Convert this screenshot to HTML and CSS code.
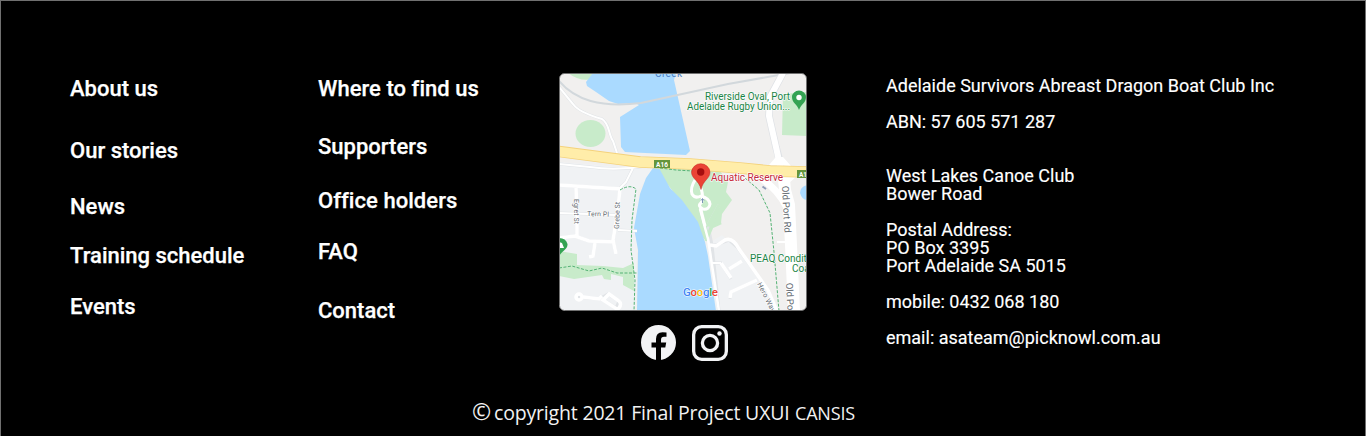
FILE: index.html
```html
<!DOCTYPE html>
<html lang="en">
<head>
<meta charset="utf-8">
<title>Adelaide Survivors Abreast</title>
<link rel="stylesheet" href="styles.css">
</head>
<body>
<footer class="footer">
  <div class="columns">
    <nav class="menu menu-main">
      <a>About us</a><a>Our stories</a><a>News</a><a>Training schedule</a><a>Events</a>
    </nav>
    <nav class="menu menu-help">
      <a>Where to find us</a><a>Supporters</a><a>Office holders</a><a>FAQ</a><a>Contact</a>
    </nav>
    <div class="location">
      <svg class="map" viewBox="559 73 248 238" role="img" aria-label="Map">
        <defs><clipPath id="frame"><rect x="559.5" y="73.5" width="247" height="237" rx="5"/></clipPath></defs>
        <g clip-path="url(#frame)">
          <rect x="559" y="73" width="248" height="238" fill="#f1f0ef"/>
          <path d="M559 162L632 168L655 169L638 190L636 311H559ZM706 245L722 235L740 252L768 288L780 311H714Z" fill="#f0f2f4"/>
          <!-- parks -->
          <g fill="#c8ebca">
            <ellipse cx="590.500" cy="133.500" rx="15" ry="13.500"/>
            <path d="M568 73Q584 85 600 76L603 73ZM783 94L807 92V136L782 135ZM559 251L577 254V265L603 266L623 268L634 263V291L623 285V277L611 274V280L604 279L602 275L574 279L559 276Z"/>
            <path d="M657 166L720 171L728 182L726 192L732 200L722 214L721 223L712 227L710 235L706 241L696 230L681 211L672 190L659 174Z"/>
          </g>
          <!-- water -->
          <path d="M593 73L586 82L587 86L596 92L609 101L618 104L635 103L639 105L620 117L621 147L625 152L686 155L690 151L674 80L676 73ZM653 168H659L670 188L682 200L698 222L705 242L708 256L716 311H637L638 250L634 228L640 194L646 178ZM807 185Q800 187 800 193Q802 200 807 200Z" fill="#aadaff"/>
          <path d="M559 81C575 100 600 108 641 103L728 84L790 73" class="rail"/>
          <!-- minor roads -->
          <g class="casing">
            <path d="M559 87L573 104C578 111 588 115 602 119C610 124 608 134 613 141L617 153M559 164L590 167Q615 171 646 166M633 168L626 182L620 188"/>
            <path d="M559 185L620 189L617 217L613 240L616 254M576 187L577 214V238M559 213L615 215M559 238L575 236L589 241L615 242M595 243L593 256L589 257M618 230L637 231"/>
            <path d="M578 297L599 299L608 294L619 301L616 308L602 299M719 205L708 225L712 245L715 273L719 311M711 245L716 245L729 240L737 247L768 290L777 311M711 263H721L731 279M729 269L742 261M757 280L731 292L730 299"/>
          </g>
          <path d="M719 205L708 225L721 223L712 227L706 241Z" fill="#c8ebca" stroke="#c8ebca" stroke-width="3"/>
          <path d="M783 73L770 97L769 116L776 147L781 166" fill="none" stroke="#dfe2e6" stroke-width="7.5"/>
          <g class="lane">
            <path d="M559 87L573 104C578 111 588 115 602 119C610 124 608 134 613 141L617 153M559 164L590 167Q615 171 646 166M633 168L626 182L620 188"/>
            <path d="M559 213L615 215M618 230L637 231M711 263H721M777 242L788 242"/>
          </g>
          <g class="street">
            <path d="M559 185L620 189L617 217L613 240L616 254M576 187L577 214V238M559 238L575 236L589 241L615 242M595 243L593 256L589 257"/>
            <circle cx="579" cy="297" r="3"/><path d="M583 297L599 299L602 296"/>
            <path d="M609 294L619 301Q622 304 619 308Q617 310 614 307L603 300Z"/>
            <path d="M710 245L716 246L725 240Q733 237 739 249L768 290L777 311M721 263L731 278M729 269L742 261M757 280L731 292L730 298"/>
            <path d="M700 209L708 239L714 278L719 311" class="thin"/>
          </g>
          <path d="M783 73L770 97L769 116L776 147L781 170" fill="none" stroke="#fff" stroke-width="6"/>
          <path d="M783 168L785 190L789 205L791 245L794 311" fill="none" stroke="#fff" stroke-width="12"/>
          <path d="M753 173Q776 186 786 206" fill="none" stroke="#fff" stroke-width="7"/>
          <path d="M769 165L776 157L783 157L791 166ZM777 176H797L788 184Z" fill="#fff"/>
          <!-- highway -->
          <path d="M559 151.500L640 162L690 164L740 168L770 171L807 172" class="road-edge"/>
          <path d="M559 151.500L640 162L690 164L740 168L770 171L807 172" class="road"/>
          <!-- walking trails -->
          <g class="trail">
            <path d="M660 168L676 170L693 171M620 190Q630 184 636 189L632 220L631 250L635 280L634 311M559 268L572 266L589 271L602 268L617 273L637 273"/>
            <path d="M745 178L759 190L770 213L774 252L779 311"/>
          </g>
          <path d="M695 180Q690 188 692 194Q695 199 701 196Q709 198 710 204Q709 210 703 209Q697 206 701 203Q704 198 701 188M700 206L705 226" class="loop"/>
          <path d="M702.500 203V199M701 200.500L702.500 198.500L704 200.500" stroke="#7c93b8" fill="none"/>
          <rect x="654" y="160" width="16" height="8" fill="#64953c"/>
          <rect x="797" y="170" width="12" height="8" fill="#64953c"/>
          <text x="656" y="166.500" class="shield" textLength="12">A16</text>
          <text x="799" y="176.500" class="shield">A16</text>
          <!-- place labels -->
          <text x="655" y="76.500" class="label creek" textLength="27">Creek</text>
          <g class="label place">
            <text x="705" y="99.500" textLength="85" lengthAdjust="spacingAndGlyphs">Riverside Oval, Port</text>
            <text x="687" y="109.500" textLength="103" lengthAdjust="spacingAndGlyphs">Adelaide Rugby Union...</text>
            <text x="750" y="262" textLength="65" lengthAdjust="spacingAndGlyphs">PEAQ Conditio</text>
            <text x="792" y="272">Coaching</text>
          </g>
          <text x="711" y="181" class="label reserve" textLength="72" lengthAdjust="spacingAndGlyphs">Aquatic Reserve</text>
          <g class="label small">
            <text x="587" y="216" textLength="22" transform="rotate(2 587 216)">Tern Pl</text>
            <text transform="translate(574 199) rotate(90)" textLength="25">Egret St</text>
            <text transform="translate(619 229) rotate(-88)" textLength="27">Grebe St</text>
            <text transform="translate(757 284) rotate(63)" textLength="32">Hero Way</text>
          </g>
          <g class="label port">
            <text transform="translate(782 186) rotate(87)" textLength="47">Old Port Rd</text>
            <text transform="translate(786 283) rotate(87)" textLength="47">Old Port Rd</text>
          </g>
          <path d="M762.500 186.500L766 189" stroke="#8f9cb8" stroke-width="2"/>
          <text x="683" y="296" class="google" textLength="35"><tspan fill="#4285f4">G</tspan><tspan fill="#ea4335">o</tspan><tspan fill="#fbbc05">o</tspan><tspan fill="#4285f4">g</tspan><tspan fill="#34a853">l</tspan><tspan fill="#ea4335">e</tspan></text>
          <!-- pins -->
          <path d="M799 110C797 104 792 103 792 97A7 6.500 0 0 1 806 97C806 103 801 104 799 110Z" fill="#34a353"/><circle cx="799" cy="97.500" r="2.700" fill="#fff"/>
          <path d="M559 257C561 251 568 250 567.500 244Q566 238 559 238Z" fill="#34a353"/><path d="M559 242L562 243L564 248H559Z" fill="#fff"/>
          <path d="M701 189.500C699 180 691.500 179 691.500 172A9.300 9.300 0 0 1 710 172C710 179 703 180 701 189.500Z" fill="#ea4335" stroke="#c5221f" stroke-width=".5"/><circle cx="700.700" cy="172" r="3.700" fill="#a50e0e"/>
        </g>
        <rect x="559.500" y="73.500" width="247" height="237" rx="5" fill="none" stroke="#707070"/>
      </svg>
      <div class="social">
        <svg class="facebook" viewBox="0 0 35 35"><circle cx="17.500" cy="17.500" r="17.500" fill="#f2f3f5"/><path d="M15 35V22.500H10.500V17.500H15V14Q15 7.500 21.500 7.200L25.500 7.500V11.800H23Q20 11.800 20 15V17.500H25.200L24.300 22.500H20V35Z" fill="#000"/></svg>
        <svg class="instagram" viewBox="0 0 36 36" fill="none" stroke="#f2f3f5" stroke-width="3.300"><rect x="1.650" y="1.650" width="32.700" height="32.700" rx="8"/><circle cx="18" cy="18" r="7.600"/><circle cx="27.500" cy="8.500" r="2.200" fill="#f2f3f5" stroke="none"/></svg>
      </div>
    </div>
    <address class="contact">
      <p>Adelaide Survivors Abreast Dragon Boat Club Inc</p>
      <p class="abn">ABN: 57 605 571 287</p>
      <p>West Lakes Canoe Club<br>Bower Road</p>
      <p>Postal Address:<br>PO Box 3395<br>Port Adelaide SA 5015</p>
      <p>mobile: 0432 068 180</p>
      <p>email: asateam@picknowl.com.au</p>
    </address>
  </div>
  <p class="copyright"><span class="mark">©</span><span class="notice">copyright 2021 Final Project UXUI</span><span class="author">CANSIS</span></p>
</footer>
</body>
</html>
```

FILE: styles.css
```css
* { box-sizing: border-box; }
body { margin: 0; background: #000; }
p { margin: 0; }
.footer {
  height: 436px;
  padding: 72px 0 0 69px;
  border: 1px solid #707070;
  border-bottom: 0;
  overflow: hidden;
  background: #000;
  color: #fff;
  font-family: Roboto, sans-serif;
}
.columns {
  display: grid;
  grid-template-columns: 248px 241px 327px 1fr;
  height: 326px;
}
.menu { display: flex; flex-direction: column; padding-top: 3px; }
.menu a { font-size: 22px; font-weight: 500; line-height: 26px; white-space: nowrap; -webkit-text-stroke: .25px #fff; }
.menu-main a:nth-child(2) { margin-top: 36px; }
.menu-main a:nth-child(3) { margin-top: 30px; }
.menu-main a:nth-child(4) { margin-top: 23px; }
.menu-main a:nth-child(5) { margin-top: 25px; }
.menu-help a:nth-child(1) { letter-spacing: .04px; }
.menu-help a:nth-child(2) { margin-top: 32px; }
.menu-help a:nth-child(3) { margin-top: 28px; letter-spacing: .05px; }
.menu-help a:nth-child(4) { margin-top: 25px; }
.menu-help a:nth-child(5) { margin-top: 33px; }
.map { display: block; width: 248px; height: 238px; }
.social { display: flex; gap: 16px; padding: 14px 0 0 82px; }
.facebook { width: 35px; height: 35px; }
.instagram { width: 36px; height: 36px; }
.contact { padding-top: 4px; font-size: 18px; font-style: normal; line-height: 18px; white-space: nowrap; -webkit-text-stroke: .15px #fff; }
.contact p { margin-bottom: 18px; }
.contact .abn { margin-bottom: 36px; }
.copyright {
  display: flex;
  align-items: baseline;
  padding-left: 402px;
  font-family: "Open Sans", "Noto Sans", sans-serif;
  font-size: 19.5px;
  letter-spacing: -.18px;
  line-height: 24px;
  color: #f2f2f2;
  white-space: nowrap;
}
.mark { width: 22px; font-size: 23px; }
.notice { width: 301px; }
.author { font-size: 18px; }

.casing, .lane, .street, .loop, .rail, .trail, .road, .road-edge { fill: none; }
.casing { stroke: #e1e4e7; stroke-width: 3; }
.lane { stroke: #fff; stroke-width: 2; }
.street { stroke: #fff; stroke-width: 3.5; }
.thin { stroke-width: 2.5; }
.loop { stroke: #fff; stroke-width: 3; }
.rail { stroke: #d2d8dc; stroke-width: 2; }
.road-edge { stroke: #f4d27c; stroke-width: 11.5; }
.road { stroke: #ffeda9; stroke-width: 9.8; }
.trail { stroke: #55b275; stroke-width: 1; stroke-dasharray: 3 1.5; }
.label { font-family: Roboto, sans-serif; font-size: 10px; stroke: #fff; stroke-width: 1.2px; paint-order: stroke; }
.place { fill: #188344; }
.reserve { fill: #c5283b; }
.creek { fill: #4b7fc5; stroke: none; }
.small { font-size: 7px; fill: #626970; }
.port { font-size: 9.5px; fill: #626970; }
.shield { font: bold 6.500px Roboto, sans-serif; fill: #fff; }
.google { font: 500 11.5px Roboto, sans-serif; stroke: #fff; stroke-width: 1px; paint-order: stroke; }
```
